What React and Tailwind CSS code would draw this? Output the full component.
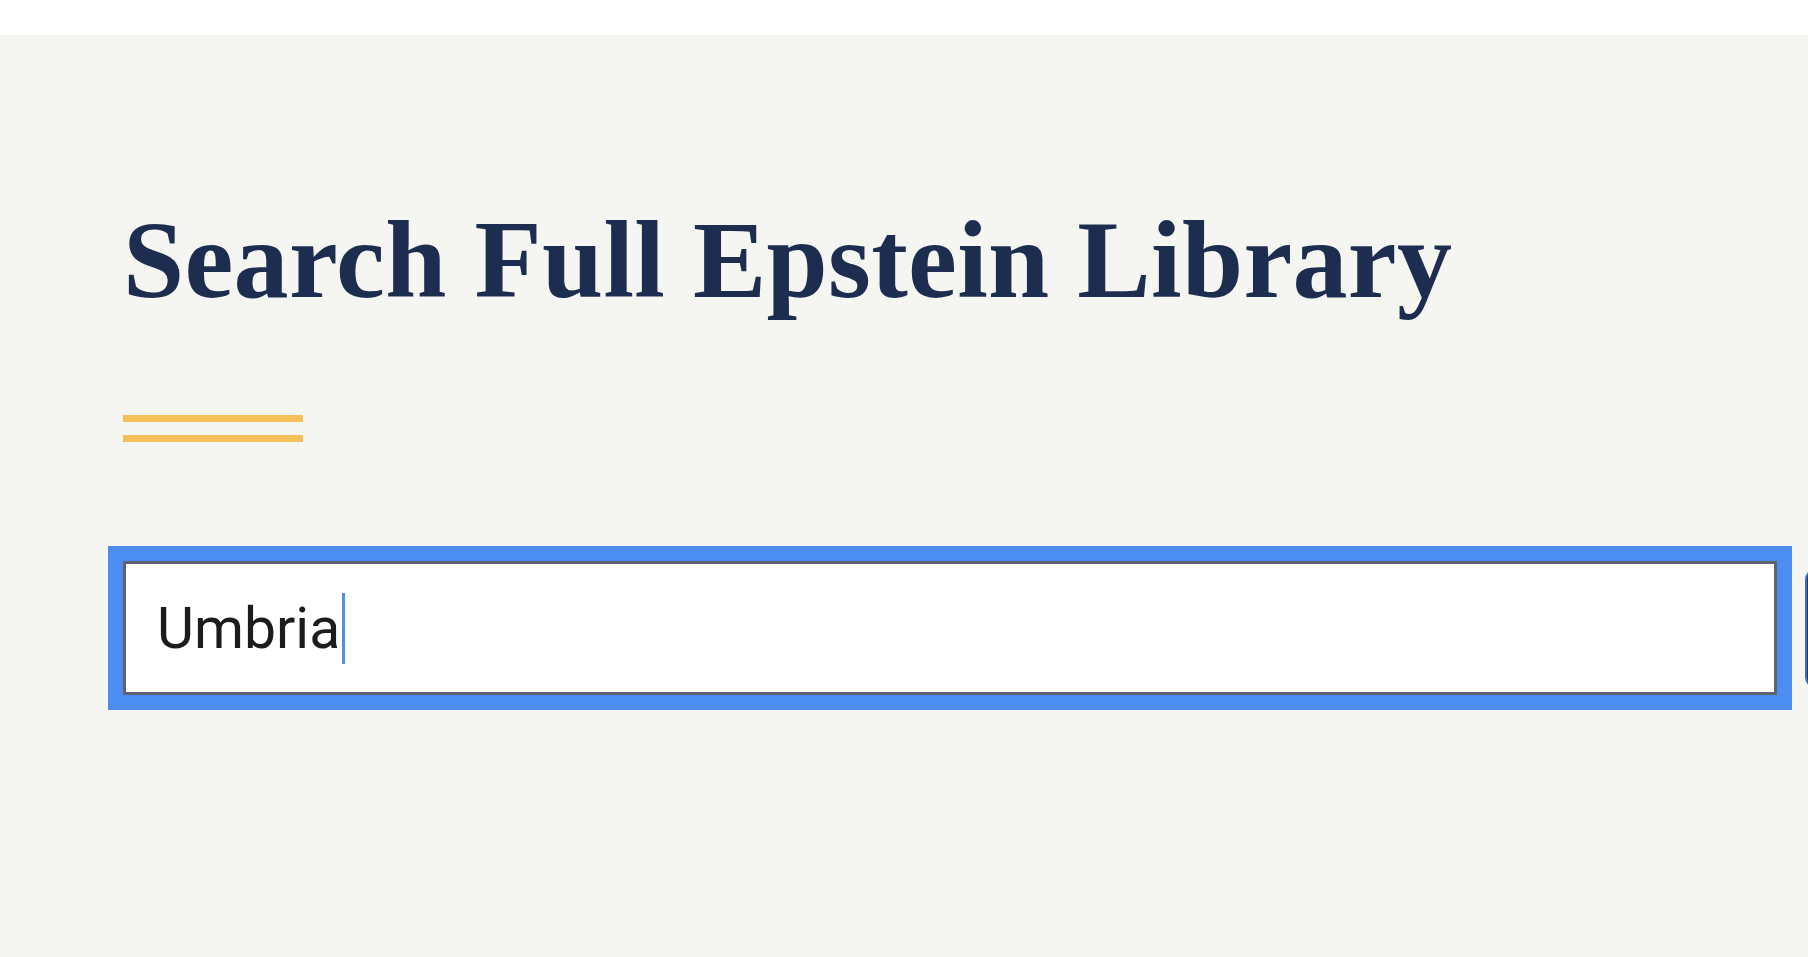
import React from 'react';

const SearchBox = ({ value }) => (
    <div className="flex items-center gap-[28px]">
        <div className="w-[1654px] h-[134px] shrink-0 border-[3px] border-[#5f636b] bg-white ring-[15px] ring-[#4b8df3] pl-[31px] flex items-center">
            <span className="text-[57px] leading-none text-[#1c1c1c] font-['Roboto',sans-serif]">{value}</span>
            <span className="w-[3px] h-[71px] bg-[#4f8fe8] ml-[2px]" />
        </div>
        <button
            aria-label="Search"
            className="shrink-0 w-[220px] h-[121px] rounded-xl bg-[#1e3a6e] border-2 border-[#3d6bc4]"
        />
    </div>
);

export default function App() {
    return (
        <div className="min-h-screen w-full overflow-hidden bg-white flex flex-col">
            <div className="h-[35px] bg-white" />
            <main className="flex-1 bg-[#f5f5f1] pl-[123px] pt-[159px]">
                <h1 className="text-[110px] leading-[132px] font-bold text-[#1d2d50] font-['Liberation_Serif',serif] whitespace-nowrap tracking-[0.3px]">
                    Search Full Epstein Library
                </h1>
                <div className="mt-[89px] w-[180px] flex flex-col gap-[13px]">
                    <div className="h-[7px] bg-[#f3c05a]" />
                    <div className="h-[7px] bg-[#f3c05a]" />
                </div>
                <div className="mt-[119px]">
                    <SearchBox value="Umbria" />
                </div>
            </main>
        </div>
    );
}
